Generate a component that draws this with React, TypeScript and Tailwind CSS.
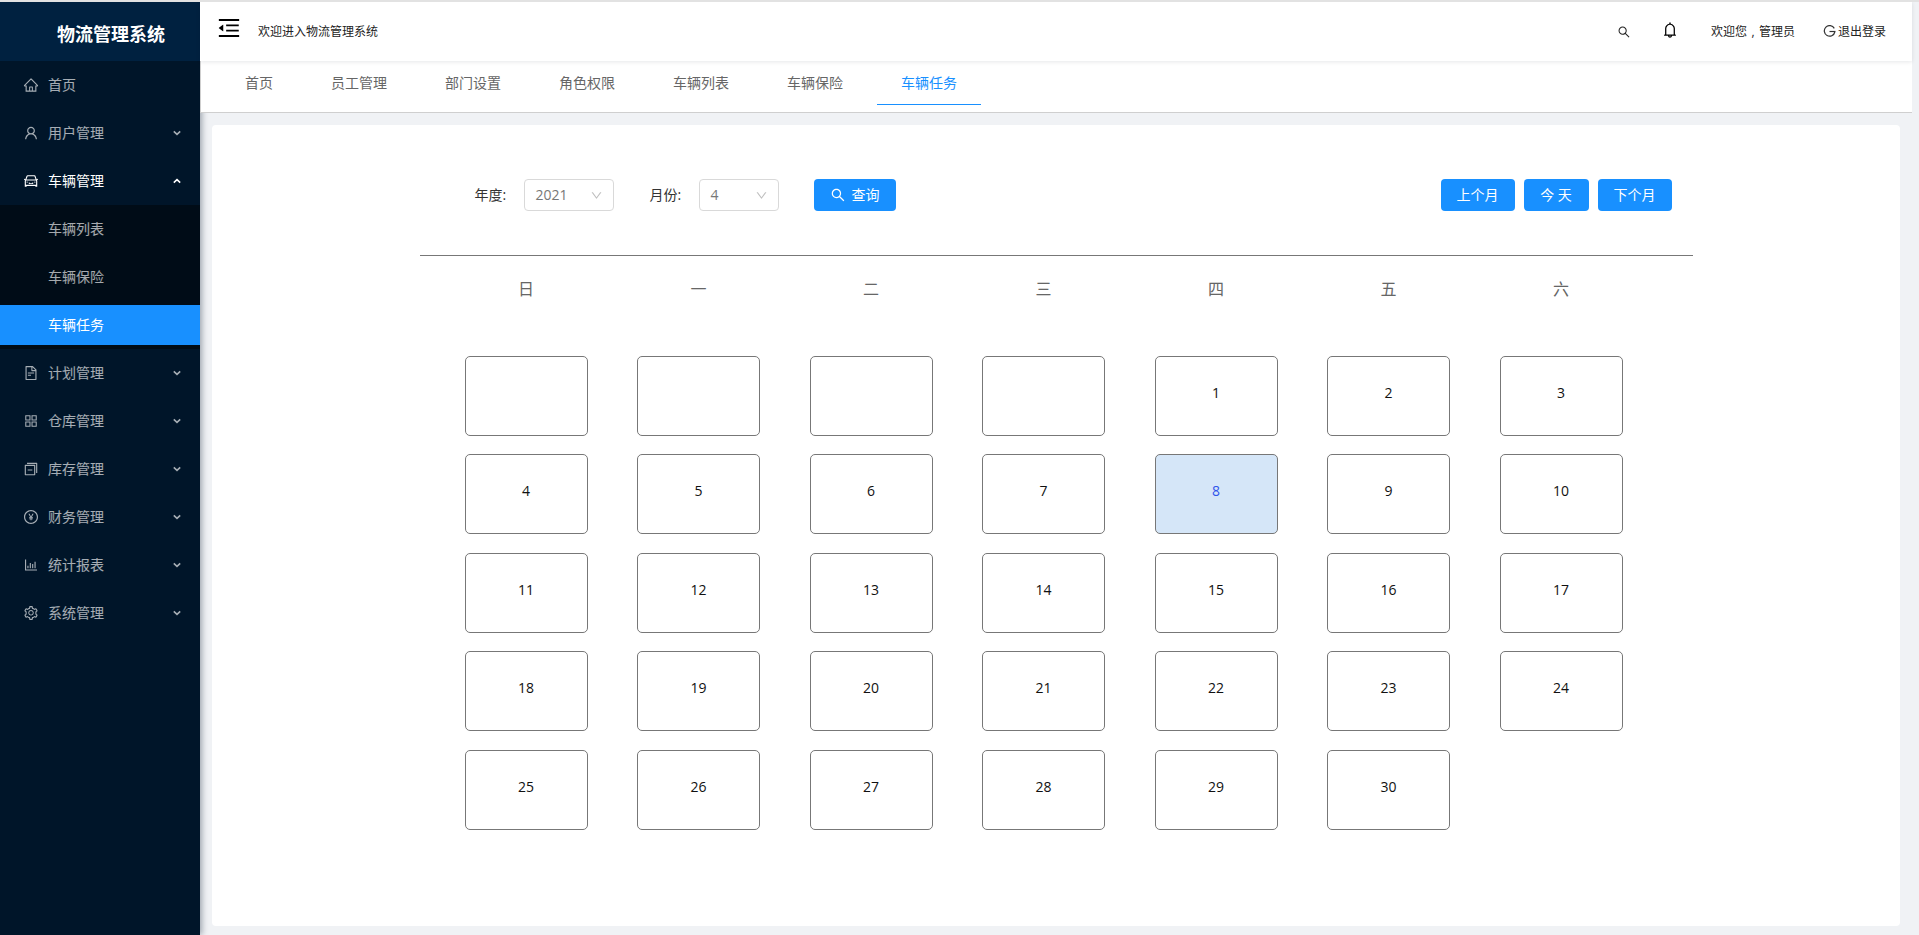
import * as React from "react";
import {
  AiOutlineAppstore,
  AiOutlineBarChart,
  AiOutlineBell,
  AiOutlineCar,
  AiOutlineDown,
  AiOutlineFileText,
  AiOutlineHome,
  AiOutlineMenuFold,
  AiOutlinePayCircle,
  AiOutlineSearch,
  AiOutlineSetting,
  AiOutlineSwitcher,
  AiOutlineUser,
} from "react-icons/ai";

const fontStack = {
  fontFamily: '"Open Sans", "Noto Sans CJK SC", sans-serif',
};

const tabs = ["首页", "员工管理", "部门设置", "角色权限", "车辆列表", "车辆保险", "车辆任务"];
const weekdays = ["日", "一", "二", "三", "四", "五", "六"];
const days: (number | null)[] = [
  null, null, null, null, 1, 2, 3,
  4, 5, 6, 7, 8, 9, 10,
  11, 12, 13, 14, 15, 16, 17,
  18, 19, 20, 21, 22, 23, 24,
  25, 26, 27, 28, 29, 30,
];

const bottomMenu = [
  { title: "计划管理", icon: AiOutlineFileText },
  { title: "仓库管理", icon: AiOutlineAppstore },
  { title: "库存管理", icon: AiOutlineSwitcher },
  { title: "财务管理", icon: AiOutlinePayCircle },
  { title: "统计报表", icon: AiOutlineBarChart },
  { title: "系统管理", icon: AiOutlineSetting },
];

function Arrow({ up }: { up?: boolean }) {
  return (
    <svg width="8" height="6" viewBox="0 0 8 6" className="ml-auto mr-[19px]" fill="none">
      <path
        d={up ? "M0.8 4.6 L4 1.6 L7.2 4.6" : "M0.8 1.4 L4 4.4 L7.2 1.4"}
        stroke="currentColor"
        strokeWidth="1.6"
      />
    </svg>
  );
}

function MenuItem({
  title,
  icon: Icon,
  open,
  arrow = true,
}: {
  title: string;
  icon: React.ComponentType<{ size?: number; className?: string }>;
  open?: boolean;
  arrow?: boolean;
}) {
  return (
    <div className={`flex h-12 items-center pl-[23px] text-sm ${open ? "text-white" : "text-white/65"}`}>
      <Icon size={16} className="mr-[9px] shrink-0" />
      <span>{title}</span>
      {arrow && <Arrow up={open} />}
    </div>
  );
}

function Sidebar() {
  return (
    <aside className="flex w-[200px] shrink-0 flex-col bg-[#001529] shadow-[2px_0_6px_rgba(0,21,41,0.35)]">
      <div className="flex h-[59px] items-center bg-[#002140] pl-[57px] pt-1 text-lg font-bold text-white">
        物流管理系统
      </div>
      <MenuItem title="首页" icon={AiOutlineHome} arrow={false} />
      <MenuItem title="用户管理" icon={AiOutlineUser} />
      <MenuItem title="车辆管理" icon={AiOutlineCar} open />
      <div className="bg-[#000c17] py-1 text-sm">
        <div className="flex h-10 items-center pl-12 text-white/65">车辆列表</div>
        <div className="mt-2 flex h-10 items-center pl-12 text-white/65">车辆保险</div>
        <div className="mt-2 flex h-10 items-center bg-[#1890ff] pl-12 text-white">车辆任务</div>
      </div>
      {bottomMenu.map((item) => (
        <MenuItem key={item.title} title={item.title} icon={item.icon} />
      ))}
    </aside>
  );
}

function Header() {
  return (
    <header className="relative z-20 flex h-[59px] items-center bg-white pl-4 pr-[26px] text-xs text-[#222] shadow-[0_1px_4px_rgba(0,21,41,0.1)]">
      <AiOutlineMenuFold size={26} className="mb-[7px] text-black" />
      <span className="ml-4">欢迎进入物流管理系统</span>
      <AiOutlineSearch size={14} className="ml-auto text-[#222]" />
      <AiOutlineBell size={18} className="mb-1 ml-[30px] text-black" />
      <span className="ml-[32px] flex">
        欢迎您<span className="inline-block w-3 text-center">,</span>管理员
      </span>
      <svg width="13" height="13" viewBox="0 0 13 13" fill="none" className="ml-7 mr-[2px] text-[#333]">
        <path d="M11.3 3.4 A5.3 5.3 0 1 0 11.8 7" stroke="currentColor" strokeWidth="1.2" />
        <path d="M6.5 6.5 H12.5" stroke="currentColor" strokeWidth="1.2" />
      </svg>
      <span>退出登录</span>
    </header>
  );
}

function TabBar() {
  return (
    <nav className="relative z-10 flex h-[52px] gap-2.5 border-b border-l border-[#cfcfcf] bg-white pl-5 text-sm text-[#666]">
      {tabs.map((tab) => {
        const active = tab === "车辆任务";
        return (
          <div key={tab} className="h-[43px] px-6">
            <div className={`flex h-full items-center ${active ? "text-[#1890ff]" : ""}`}>{tab}</div>
            {active && <div className="-mx-6 h-px bg-[#1890ff]" />}
          </div>
        );
      })}
    </nav>
  );
}

function SelectBox({ value, width }: { value: string; width: string }) {
  return (
    <div className={`flex h-8 items-center rounded border border-[#d9d9d9] bg-white pl-[11px] pr-[10px] text-sm text-[#777] ${width}`}>
      <span>{value}</span>
      <AiOutlineDown size={13} className="ml-auto text-[#bfbfbf]" />
    </div>
  );
}

function BlueButton({ children, width }: { children: React.ReactNode; width: string }) {
  return (
    <button className={`flex h-8 items-center justify-center rounded bg-[#1890ff] text-sm text-white ${width}`}>
      {children}
    </button>
  );
}

function Toolbar() {
  return (
    <div className="flex items-center pl-[55px] pr-[21px]">
      <span className="mr-[14px] w-[35px] text-sm whitespace-nowrap text-[#333]">年度:</span>
      <SelectBox value="2021" width="w-[90px]" />
      <span className="ml-9 mr-[14px] w-[35px] text-sm whitespace-nowrap text-[#333]">月份:</span>
      <SelectBox value="4" width="w-[80px]" />
      <BlueButton width="ml-[35px] w-[82px]">
        <AiOutlineSearch size={16} className="mr-1.5" />
        查询
      </BlueButton>
      <div className="ml-auto flex gap-[9px]">
        <BlueButton width="w-[74px]">上个月</BlueButton>
        <BlueButton width="w-[65px]">今 天</BlueButton>
        <BlueButton width="w-[74px]">下个月</BlueButton>
      </div>
    </div>
  );
}

function Calendar() {
  return (
    <div className="mx-auto w-[1273px] pt-[54px]">
      <Toolbar />
      <div className="mt-[44px] h-px bg-[#777]" />
      <div className="ml-[45px] mt-[21px] grid w-[1158px] grid-cols-7 gap-x-[49.5px] text-base text-[#666]">
        {weekdays.map((d) => (
          <div key={d} className="h-6 text-center leading-6">
            {d}
          </div>
        ))}
      </div>
      <div className="ml-[45px] mt-[55px] grid w-[1158px] grid-cols-7 gap-x-[49.5px] gap-y-[18.4px]">
        {days.map((d, i) => (
          <div
            key={i}
            className={`flex h-20 items-center justify-center rounded-[5px] border border-[#777] pb-[6px] text-sm ${
              d === 8 ? "bg-[#d5e6f8] text-[#2f54eb]" : "text-[#111]"
            }`}
          >
            {d}
          </div>
        ))}
      </div>
    </div>
  );
}

export default function App() {
  return (
    <div className="flex h-[935px] overflow-hidden border-t-2 border-[#e2e2e2] bg-[#f0f2f5]" style={fontStack}>
      <Sidebar />
      <div className="mr-[7px] flex min-w-0 flex-1 flex-col">
        <Header />
        <TabBar />
        <main className="flex-1 px-3 pb-[9px] pt-3">
          <div className="h-full rounded-sm bg-white">
            <Calendar />
          </div>
        </main>
      </div>
    </div>
  );
}
